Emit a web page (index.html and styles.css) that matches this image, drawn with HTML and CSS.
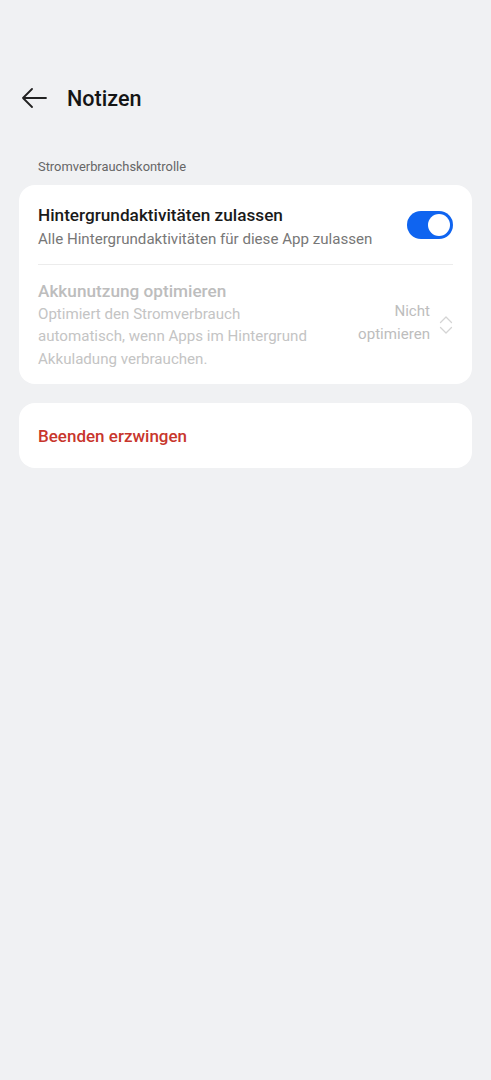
FILE: index.html
```html
<!DOCTYPE html>
<html lang="de">
<head>
    <meta charset="UTF-8">
    <meta name="viewport" content="width=device-width, initial-scale=1.0">
    <title>Notizen</title>
    <link rel="stylesheet" href="styles.css">
</head>
<body>
    <div class="header">
        <svg class="back" width="26" height="20" viewBox="0 0 26 20">
            <path d="M25 10H2M11 1L2 10l9 9" fill="none" stroke="#222" stroke-width="1.8" stroke-linecap="round" stroke-linejoin="round"/>
        </svg>
        <h1>Notizen</h1>
    </div>

    <div class="section-label">Stromverbrauchskontrolle</div>

    <div class="card">
        <div class="row">
            <div class="row-text">
                <div class="row-title">Hintergrundaktivitäten zulassen</div>
                <div class="row-sub">Alle Hintergrundaktivitäten für diese App zulassen</div>
            </div>
            <div class="toggle"><div class="knob"></div></div>
        </div>
        <div class="divider"></div>
        <div class="row disabled">
            <div class="row-text">
                <div class="row-title">Akkunutzung optimieren</div>
                <div class="row-sub">Optimiert den Stromverbrauch automatisch, wenn Apps im Hintergrund Akkuladung verbrauchen.</div>
            </div>
            <div class="value">Nicht<br>optimieren</div>
            <svg class="updown" width="14" height="20" viewBox="0 0 14 20">
                <path d="M1.5 7.5L7 2l5.5 5.5M1.5 12.5L7 18l5.5-5.5" fill="none" stroke="#d4d4d4" stroke-width="1.3" stroke-linecap="round" stroke-linejoin="round"/>
            </svg>
        </div>
    </div>

    <div class="card action">
        <div class="danger">Beenden erzwingen</div>
    </div>
</body>
</html>
```

FILE: styles.css
```css
body {
    margin: 0;
    background: #f0f1f3;
    font-family: Roboto, "Noto Sans", sans-serif;
    color: #1a1a1a;
    padding: 0 19px;
}
.header {
    display: flex;
    align-items: center;
    height: 40px;
    margin-top: 78px;
}
.back {
    margin-left: 2px;
    margin-right: 20px;
}
h1 {
    margin: 0;
    font-size: 21.6px;
    font-weight: 500;
    color: #151515;
}
.section-label {
    margin: 40px 0 0 19px;
    font-size: 12.9px;
    color: #666;
    line-height: 18px;
}
.card {
    background: #fff;
    border-radius: 16px;
    margin-top: 9px;
    padding: 0 19px;
}
.row {
    display: flex;
    align-items: center;
}
.row:first-child {
    padding: 18px 0 13px;
}
.row-text {
    flex: 1;
}
.row-title {
    font-size: 17.2px;
    font-weight: 500;
    line-height: 24px;
}
.row-sub {
    font-size: 15.1px;
    color: #777;
    line-height: 22.5px;
    margin-top: 1px;
}
.toggle {
    width: 46px;
    height: 28px;
    border-radius: 14px;
    background: #0f64f0;
    position: relative;
    margin-top: -3px;
}
.knob {
    position: absolute;
    right: 3px;
    top: 3px;
    width: 22px;
    height: 22px;
    border-radius: 50%;
    background: #fff;
}
.divider {
    height: 1px;
    background: #ececec;
}
.disabled {
    padding: 14px 0 14px;
}
.disabled .row-text {
    flex: 0 0 285px;
}
.disabled .row-title {
    color: #bdbdbd;
}
.disabled .row-sub {
    color: #c4c4c4;
    margin-top: 0;
}
.value {
    flex: 1;
    text-align: right;
    font-size: 15.1px;
    line-height: 23px;
    color: #bdbdbd;
    margin-top: -2px;
}
.updown {
    margin-left: 9px;
    margin-top: 2px;
}
.action {
    margin-top: 19px;
    height: 65px;
    display: flex;
    align-items: center;
}
.danger {
    color: #c8362c;
    font-size: 17px;
    font-weight: 500;
}
```
